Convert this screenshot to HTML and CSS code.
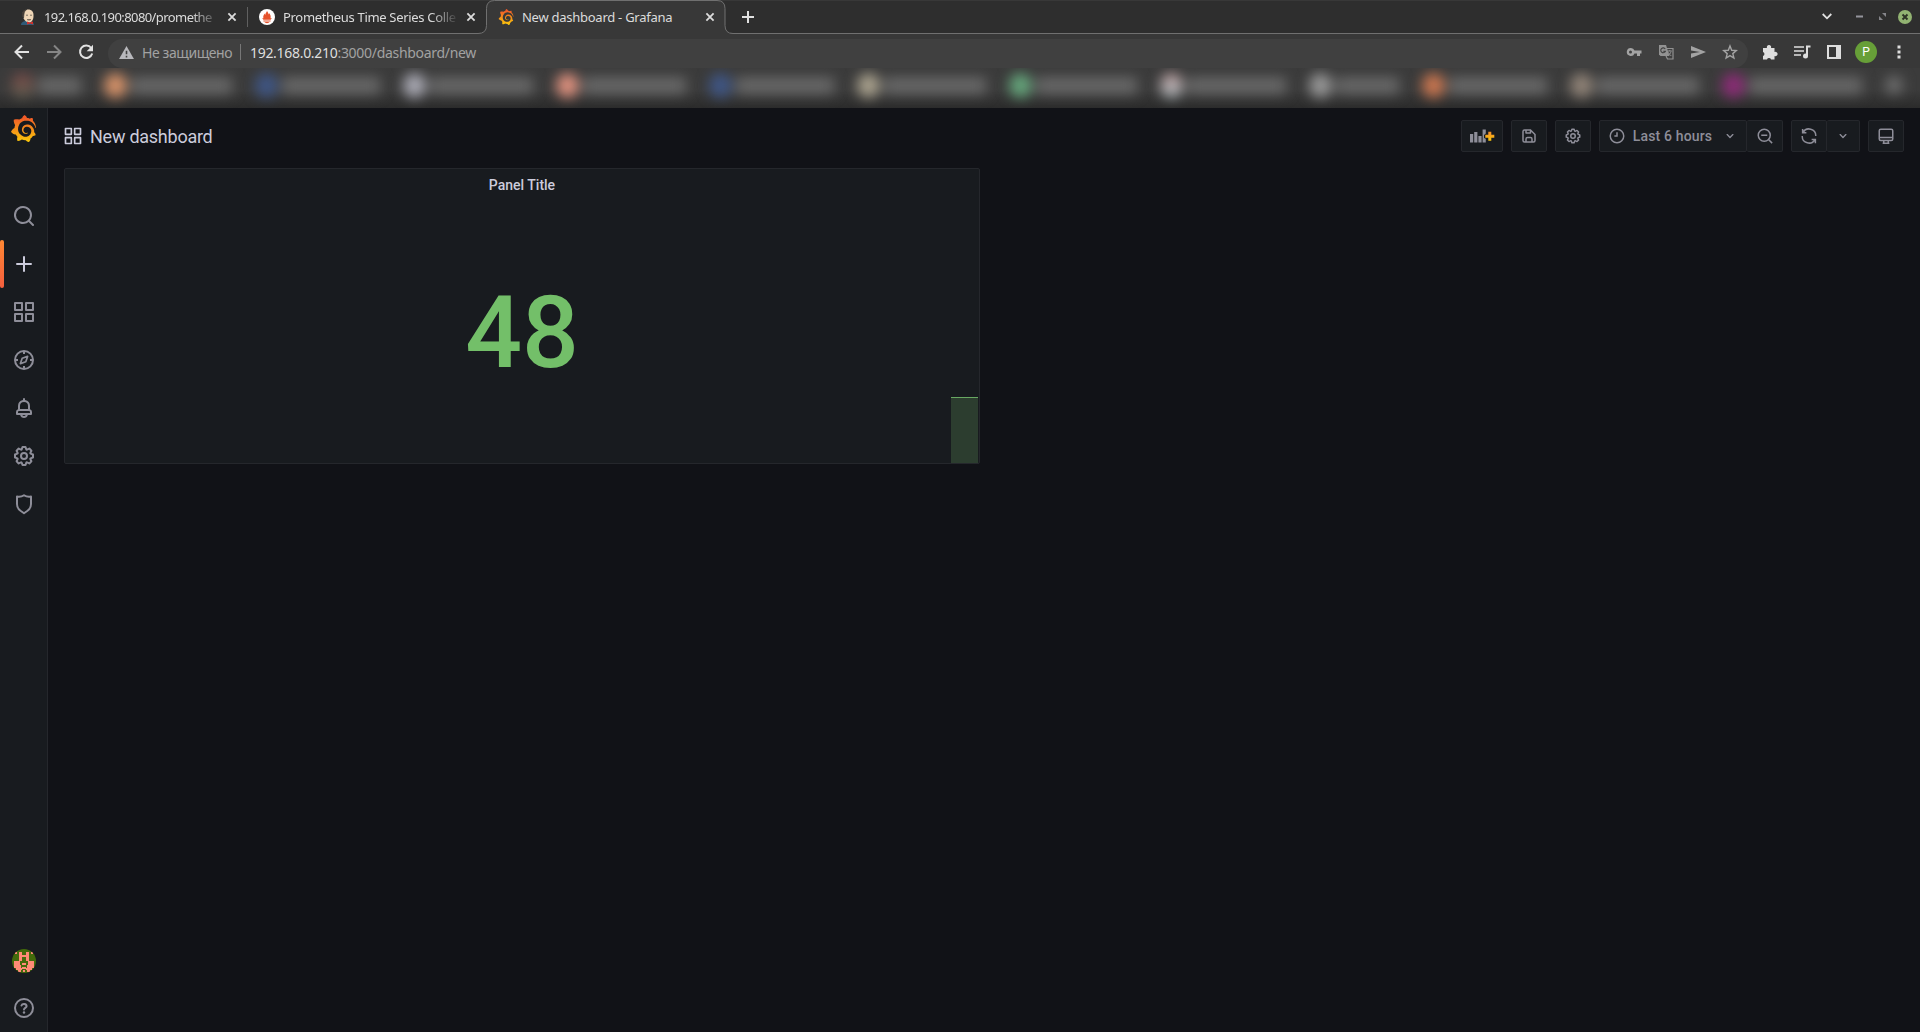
FILE: index.html
```html
<!DOCTYPE html>
<html lang="en">
<head>
<meta charset="utf-8">
<title>New dashboard - Grafana</title>
<link rel="stylesheet" href="styles.css">
</head>
<body>
<svg class="defs" width="0" height="0">
  <defs>
    <linearGradient id="flame" x1="0" y1="0" x2="0" y2="1"><stop offset=".1" stop-color="#f05a28"/><stop offset="1" stop-color="#fbca0a"/></linearGradient>
    <linearGradient id="flame-plus" x1="0" y1="0" x2="0" y2="1"><stop offset="0" stop-color="#f58a2c"/><stop offset="1" stop-color="#fbca0a"/></linearGradient>
    <symbol id="grafana" viewBox="0 0 24 24"><path fill="url(#flame)" d="M23.02 10.59a8.578 8.578 0 0 0-.862-3.034 8.911 8.911 0 0 0-1.789-2.445c.337-1.342-.413-2.505-.413-2.505-1.292-.08-2.113.4-2.416.62-.052-.02-.102-.044-.154-.064-.22-.089-.446-.172-.677-.247-.231-.073-.47-.14-.711-.197a9.867 9.867 0 0 0-.875-.161C14.557.753 12.94 0 12.94 0c-1.804 1.145-2.147 2.744-2.147 2.744l-.018.093c-.098.029-.2.057-.298.088-.138.042-.275.094-.413.143-.138.055-.275.107-.41.166a8.869 8.869 0 0 0-1.557.87l-.063-.029c-2.497-.955-4.716.195-4.716.195-.203 2.658.996 4.33 1.235 4.636a11.608 11.608 0 0 0-.607 2.635C1.636 12.677.953 15.014.953 15.014c1.926 2.214 4.171 2.351 4.171 2.351.003-.002.006-.002.006-.005.285.509.615.994.986 1.446.156.19.32.371.488.548-.704 2.009.099 3.68.099 3.68 2.144.08 3.553-.937 3.849-1.173a9.784 9.784 0 0 0 3.164.501h.08l.055-.003.107-.002.103-.005.003.002c1.01 1.44 2.788 1.646 2.788 1.646 1.264-1.332 1.337-2.653 1.337-2.94v-.058c0-.02-.003-.039-.003-.06.265-.187.52-.387.758-.6a7.875 7.875 0 0 0 1.415-1.7c1.43.083 2.437-.885 2.437-.885-.236-1.49-1.085-2.216-1.264-2.354l-.018-.013-.016-.013a.217.217 0 0 1-.031-.02c.008-.092.016-.18.02-.27.011-.162.016-.323.016-.48v-.253l-.005-.098-.008-.135a1.891 1.891 0 0 0-.01-.13c-.003-.042-.008-.083-.013-.125l-.016-.124-.018-.122a6.215 6.215 0 0 0-2.032-3.73 6.015 6.015 0 0 0-3.222-1.46 6.292 6.292 0 0 0-.85-.048l-.107.002h-.063l-.044.003-.104.008a4.777 4.777 0 0 0-3.335 1.695c-.332.4-.592.84-.768 1.297a4.594 4.594 0 0 0-.312 1.817l.003.091c.005.055.007.11.013.164a3.615 3.615 0 0 0 .698 1.82 3.53 3.53 0 0 0 1.827 1.282c.33.098.66.14.971.137.039 0 .078 0 .114-.002l.063-.003c.02 0 .041-.003.062-.003.034-.002.065-.007.099-.01.007 0 .018-.003.028-.003l.031-.005.06-.008a1.18 1.18 0 0 0 .112-.02c.036-.008.072-.013.109-.024a2.634 2.634 0 0 0 .914-.415c.028-.02.056-.041.085-.065a.248.248 0 0 0 .039-.35.244.244 0 0 0-.309-.06l-.078.042c-.09.044-.184.083-.283.116a2.476 2.476 0 0 1-.475.096c-.028.003-.054.006-.083.006l-.083.002c-.026 0-.054 0-.08-.002l-.102-.006h-.012l-.024.006c-.016-.003-.031-.003-.044-.006-.031-.002-.06-.007-.091-.01a2.59 2.59 0 0 1-.724-.213 2.557 2.557 0 0 1-.667-.438 2.52 2.52 0 0 1-.805-1.475 2.306 2.306 0 0 1-.029-.444l.006-.122v-.023l.002-.031c.003-.021.003-.04.005-.06a3.163 3.163 0 0 1 1.352-2.29 3.12 3.12 0 0 1 .937-.43 2.946 2.946 0 0 1 .776-.101h.06l.07.002.045.003h.026l.07.005a4.041 4.041 0 0 1 1.635.49 3.94 3.94 0 0 1 1.602 1.662 3.77 3.77 0 0 1 .397 1.414l.005.076.003.075c.002.026.002.05.002.075 0 .024.003.052 0 .07v.065l-.002.073-.008.174a6.195 6.195 0 0 1-.08.639 5.1 5.1 0 0 1-.267.927 5.31 5.31 0 0 1-.624 1.13 5.052 5.052 0 0 1-3.237 2.014 4.82 4.82 0 0 1-.649.066l-.039.003h-.287a6.607 6.607 0 0 1-1.716-.265 6.776 6.776 0 0 1-3.4-2.274 6.75 6.75 0 0 1-.746-1.15 6.616 6.616 0 0 1-.714-2.596l-.005-.083-.002-.02v-.056l-.003-.073v-.096l-.003-.104v-.07l.003-.163c.008-.22.026-.45.054-.678a8.707 8.707 0 0 1 .28-1.355c.128-.444.286-.872.473-1.277a7.04 7.04 0 0 1 1.456-2.1 5.925 5.925 0 0 1 .953-.763c.169-.111.343-.213.524-.306.089-.05.182-.091.273-.135.047-.02.093-.042.138-.062a7.177 7.177 0 0 1 .714-.267l.145-.045c.049-.015.098-.026.148-.041.098-.029.197-.052.296-.076.049-.013.1-.02.15-.033l.15-.032.151-.028.076-.013.075-.01.153-.024c.057-.01.114-.013.171-.023l.169-.021c.036-.003.073-.008.106-.01l.073-.008.036-.003.042-.002c.057-.003.114-.008.171-.01l.086-.006h.023l.037-.003.145-.007a7.999 7.999 0 0 1 1.708.125 7.917 7.917 0 0 1 2.048.68 8.253 8.253 0 0 1 1.672 1.09l.09.077.089.078c.06.052.114.107.171.159.057.052.112.106.166.16.052.055.107.107.159.164a8.671 8.671 0 0 1 1.41 1.978c.012.026.028.052.04.078l.04.078.075.156c.023.051.05.1.07.153l.065.15a8.848 8.848 0 0 1 .45 1.34.19.19 0 0 0 .201.142.186.186 0 0 0 .172-.184c.01-.246.002-.532-.024-.856z"/></symbol>
    <symbol id="apps" viewBox="0 0 24 24"><path d="M10,13H3a1,1,0,0,0-1,1v7a1,1,0,0,0,1,1h7a1,1,0,0,0,1-1V14A1,1,0,0,0,10,13ZM9,20H4V15H9ZM21,2H14a1,1,0,0,0-1,1v7a1,1,0,0,0,1,1h7a1,1,0,0,0,1-1V3A1,1,0,0,0,21,2ZM20,9H15V4h5Zm1,4H14a1,1,0,0,0-1,1v7a1,1,0,0,0,1,1h7a1,1,0,0,0,1-1V14A1,1,0,0,0,21,13Zm-1,7H15V15h5ZM10,2H3A1,1,0,0,0,2,3v7a1,1,0,0,0,1,1h7a1,1,0,0,0,1-1V3A1,1,0,0,0,10,2ZM9,9H4V4H9Z"/></symbol>
    <symbol id="cog" viewBox="0 0 24 24"><path d="M21.32,9.55l-1.89-.63.89-1.78A1,1,0,0,0,20.13,6L18,3.87a1,1,0,0,0-1.15-.19l-1.78.89-.63-1.89A1,1,0,0,0,13.5,2h-3a1,1,0,0,0-.95.68L8.92,4.57,7.14,3.68A1,1,0,0,0,6,3.87L3.87,6a1,1,0,0,0-.19,1.15l.89,1.78-1.89.63A1,1,0,0,0,2,10.5v3a1,1,0,0,0,.68.95l1.89.63-.89,1.78A1,1,0,0,0,3.87,18L6,20.13a1,1,0,0,0,1.15.19l1.78-.89.63,1.89a1,1,0,0,0,.95.68h3a1,1,0,0,0,.95-.68l.63-1.89,1.78.89A1,1,0,0,0,18,20.13L20.13,18a1,1,0,0,0,.19-1.15l-.89-1.78,1.89-.63A1,1,0,0,0,22,13.5v-3A1,1,0,0,0,21.32,9.55ZM20,12.78l-1.2.4A2,2,0,0,0,17.64,16l.57,1.14-1.1,1.1L16,17.64a2,2,0,0,0-2.79,1.16l-.4,1.2H11.22l-.4-1.2A2,2,0,0,0,8,17.64l-1.14.57-1.1-1.1L6.36,16A2,2,0,0,0,5.2,13.18L4,12.78V11.22l1.2-.4A2,2,0,0,0,6.36,8L5.79,6.89l1.1-1.1L8,6.36A2,2,0,0,0,10.82,5.2l.4-1.2h1.56l.4,1.2A2,2,0,0,0,16,6.36l1.14-.57,1.1,1.1L17.64,8a2,2,0,0,0,1.16,2.79l1.2.4ZM12,8a4,4,0,1,0,4,4A4,4,0,0,0,12,8Zm0,6a2,2,0,1,1,2-2A2,2,0,0,1,12,14Z"/></symbol>
    <symbol id="angle" viewBox="0 0 24 24"><path d="M17,9.17a1,1,0,0,0-1.41,0L12,12.71,8.46,9.17a1,1,0,0,0-1.41,0,1,1,0,0,0,0,1.42l4.24,4.24a1,1,0,0,0,1.42,0L17,10.59A1,1,0,0,0,17,9.17Z"/></symbol>
    <symbol id="close" viewBox="0 0 10 10"><path d="M1.4 1.4l7.2 7.2M8.6 1.4L1.4 8.6" stroke="#dcdcdc" stroke-width="1.8"/></symbol>
  </defs>
</svg>

<header class="browser">
  <div class="tabstrip">
    <div class="tab tab-first">
      <svg class="favicon" viewBox="0 0 16 16"><path d="M1 16c0-3 3-4 5-4h4c2 0 4 2 4 4z" fill="#2f5a77"/><path d="M2.500 6C2 2 5 .6 8 .6c4 0 5.800 2.600 5.500 6.400 0 4-2 6.500-4.500 6.500S3 10.500 2.500 6z" fill="#efd6b7"/><path d="M2 7C1.500 2.500 4 .4 7 .3 4.500 2 4.500 3 4 5l-.5 4zM6 6.200h2M10 6.200h2M7 10.500c1 .8 2.500.8 4 0" stroke="#30302f" stroke-width=".6" fill="#4a4039"/><path d="M7 12.500l3 1 3-1v3l-3-1-3 1z" fill="#d4312b"/></svg>
      <span class="tab-title fade">192.168.0.190:8080/promethe</span>
      <svg class="close"><use href="#close"/></svg>
    </div>
    <div class="tab tab-second">
      <svg class="favicon" viewBox="0 0 16 16"><circle cx="8" cy="8" r="8" fill="#fff"/><path d="M8 1.800c.4 1.400 1.600 2 1.500 3.600.6-.3.6-1 .5-1.400 1.500 1.500 2.100 3.600 1.500 5.300l1.200-.3c-.2.700-.7 1.500-1.100 1.800H4.400c-.4-.4-.9-1.100-1.100-1.800l1.200.3C3.700 7.300 4.800 5.600 5.700 4.400c.1.700.3 1.200.7 1.400C6.200 4.300 7.700 3.600 8 1.800zM4.400 11.400h7.200v1.200H4.400zM5.600 13.100h4.800c-.4 1.400-4.400 1.400-4.800 0z" fill="#e6522c"/></svg>
      <span class="tab-title fade">Prometheus Time Series Colle</span>
      <svg class="close"><use href="#close"/></svg>
    </div>
    <div class="tab tab-active">
      <svg class="tab-shape" viewBox="0 0 255 34"><path d="M0 34v-.5q8.500 0 8.500-8V8.500Q8.500.5 16.500.5H239q8 0 8 8V25.500q0 8 8 8v.5z" fill="#383838"/><path d="M0 33.500q8.500 0 8.500-8V8.500Q8.500.5 16.500.5H239q8 0 8 8V25.500q0 8 8 8" fill="none" stroke="#707070"/></svg>
      <svg class="favicon"><use href="#grafana"/></svg>
      <span class="tab-title">New dashboard - Grafana</span>
      <svg class="close"><use href="#close"/></svg>
    </div>
    <svg class="new-tab" viewBox="0 0 12 12"><path d="M6 0v12M0 6h12" stroke="#e0e0e0" stroke-width="2"/></svg>
    <div class="window-controls">
      <svg width="10" height="7" viewBox="0 0 10 7"><path d="M.7 1L5 5.300 9.300 1" fill="none" stroke="#e0e0e0" stroke-width="1.800"/></svg>
      <svg width="7" height="7" viewBox="0 0 7 7"><path d="M0 3.500h7" stroke="#94949c" stroke-width="2"/></svg>
      <svg width="7" height="7" viewBox="0 0 7 7"><path d="M3 0h4v4zM0 3v4h4z" fill="#85858a"/></svg>
      <svg width="14" height="14" viewBox="0 0 14 14"><circle cx="7" cy="7" r="7" fill="#92b372"/><path d="M4.500 4.500l5 5M9.500 4.500l-5 5" stroke="#2d3325" stroke-width="1.900"/></svg>
    </div>
  </div>

  <div class="toolbar">
    <svg class="nav" viewBox="0 0 16 16"><path d="M15 8H2M8 1.500L1.500 8 8 14.500" fill="none" stroke="#e2e2e2" stroke-width="2"/></svg>
    <svg class="nav" viewBox="0 0 16 16"><path d="M1 8h13M8 1.500L14.500 8 8 14.500" fill="none" stroke="#858585" stroke-width="2"/></svg>
    <svg class="nav" viewBox="0 0 16 16"><path d="M13.200 4A6.200 6.200 0 1 0 14.200 9.500" fill="none" stroke="#e2e2e2" stroke-width="2"/><path d="M15 .8v6.400H8.700z" fill="#e2e2e2"/></svg>
    <div class="omnibox">
      <svg class="warn" viewBox="0 0 16 14"><path d="M8 0l8 14H0z" fill="#b8b8bc"/><path d="M8 5v4M8 10.500v2" stroke="#404040" stroke-width="1.700"/></svg>
      <span class="insecure">Не защищено</span>
      <span class="divider"></span>
      <span class="url"><b>192.168.0.210</b>:3000/dashboard/new</span>
      <div class="omni-actions">
        <svg width="16" height="16" viewBox="0 0 16 16"><path fill-rule="evenodd" d="M5 4a4 4 0 1 0 3.500 5.500H11V12h3V9.500h1.500v-3h-7A4 4 0 0 0 5 4zm-.5 2.500a1.500 1.500 0 1 1 0 3 1.500 1.500 0 0 1 0-3z" fill="#a3a3a3"/></svg>
        <svg width="16" height="16" viewBox="0 0 16 16"><path d="M1 1h7l3.500 11H2.500L1 10.500z" fill="#929292"/><path d="M8 4.500h7v10.500H9.500L8 12" fill="none" stroke="#929292" stroke-width="1.200"/><path d="M7.200 5A2.400 2.400 0 1 0 7.400 7.200H5.200" fill="none" stroke="#404040" stroke-width="1.100"/><path d="M9.800 7h4M11.800 6v1M13 7.500c-.5 2-1.500 3-2.800 4M10.500 8.500c.7 1.500 1.700 2.500 2.800 3.500" fill="none" stroke="#929292"/></svg>
        <svg width="16" height="16" viewBox="0 0 16 16"><path d="M1 2l15 6-15 6V9.500L10 8 1 6.500z" fill="#a3a3a3"/></svg>
        <svg width="16" height="16" viewBox="0 0 16 16"><path d="M8 2l1.700 4.300 4.600.3-3.500 3 1.100 4.400L8 11.600 4.100 14l1.100-4.400-3.500-3 4.600-.3z" fill="none" stroke="#a3a3a3" stroke-width="1.400"/></svg>
      </div>
    </div>
    <div class="extensions">
      <svg width="16" height="16" viewBox="0 0 16 16"><path d="M1 4h4a2.200 2.200 0 1 1 4 0h3.500v4a2.200 2.200 0 1 1 0 4v3.500H9a2.100 2.100 0 0 0-4 0H1V12a2.100 2.100 0 0 0 0-4z" fill="#dedede"/></svg>
      <svg width="18" height="16" viewBox="0 0 18 16"><path d="M1 3h10M1 7h10M1 11h7" stroke="#dedede" stroke-width="1.700"/><path d="M14 12V2.500h3.500" fill="none" stroke="#dedede" stroke-width="2"/><circle cx="12.500" cy="12" r="2.500" fill="#dedede"/></svg>
      <svg width="14" height="14" viewBox="0 0 14 14"><path fill-rule="evenodd" d="M0 0h14v14H0zM2 2v10h7V2z" fill="#dedede"/></svg>
      <span class="profile">P</span>
      <svg width="4" height="14" viewBox="0 0 4 14"><path d="M.5.500h3v3h-3zM.5 5.500h3v3h-3zM.5 10.500h3v3h-3z" fill="#dedede"/></svg>
    </div>
  </div>

  <div class="bookmarks">
    <div class="bookmark maroon"><i></i><span></span></div>
    <div class="bookmark orange"><i></i><span></span></div>
    <div class="bookmark blue"><i></i><span></span></div>
    <div class="bookmark silver"><i></i><span></span></div>
    <div class="bookmark salmon"><i></i><span></span></div>
    <div class="bookmark blue"><i></i><span></span></div>
    <div class="bookmark sand"><i></i><span></span></div>
    <div class="bookmark green"><i></i><span></span></div>
    <div class="bookmark pearl"><i></i><span></span></div>
    <div class="bookmark gray"><i></i><span></span></div>
    <div class="bookmark rust"><i></i><span></span></div>
    <div class="bookmark taupe"><i></i><span></span></div>
    <div class="bookmark purple"><i></i><span></span></div>
    <div class="bookmark more"><i></i></div>
  </div>
</header>

<div class="app">
  <nav class="sidebar">
    <div class="logo"><svg width="27" height="27"><use href="#grafana"/></svg></div>
    <div class="menu">
      <a class="item"><svg class="icon" viewBox="0 0 24 24"><path d="M21.710,20.290,18,16.610A9,9,0,1,0,16.610,18l3.680,3.680a1,1,0,0,0,1.420,0A1,1,0,0,0,21.710,20.290ZM11,18a7,7,0,1,1,7-7A7,7,0,0,1,11,18Z"/></svg></a>
      <a class="item active"><svg class="icon" viewBox="0 0 24 24"><path d="M19,11H13V5a1,1,0,0,0-2,0v6H5a1,1,0,0,0,0,2h6v6a1,1,0,0,0,2,0V13h6a1,1,0,0,0,0-2Z"/></svg></a>
      <a class="item"><svg class="icon"><use href="#apps"/></svg></a>
      <a class="item"><svg class="icon" viewBox="0 0 24 24"><g fill="none" stroke="currentColor" stroke-width="2"><circle cx="12" cy="12" r="9"/><path d="M12 3v3M12 18v3M3 12h3M18 12h3"/><path d="M15.600 8.400l-1.800 5.400-5.400 1.800 1.800-5.400z" stroke-width="1.700" stroke-linejoin="round"/></g></svg></a>
      <a class="item"><svg class="icon" viewBox="0 0 24 24"><path d="M18,13.180V10a6,6,0,0,0-5-5.910V3a1,1,0,0,0-2,0V4.090A6,6,0,0,0,6,10v3.180A3,3,0,0,0,4,16v2a1,1,0,0,0,1,1H8.140a4,4,0,0,0,7.720,0H19a1,1,0,0,0,1-1V16A3,3,0,0,0,18,13.180ZM8,10a4,4,0,0,1,8,0v3H8Zm4,10a2,2,0,0,1-1.720-1h3.440A2,2,0,0,1,12,20Zm6-3H6V16a1,1,0,0,1,1-1H17a1,1,0,0,1,1,1Z"/></svg></a>
      <a class="item"><svg class="icon"><use href="#cog"/></svg></a>
      <a class="item"><svg class="icon" viewBox="0 0 24 24"><path d="M12 3.200c2 1.400 4.500 1.900 7 1.400v7.300c0 3.200-1.300 5.300-3.500 6.900L12 21.200l-3.500-2.400C6.300 17.200 5 15.100 5 11.900V4.600c2.500.5 5 0 7-1.400z" fill="none" stroke="currentColor" stroke-width="2" stroke-linejoin="round"/></svg></a>
    </div>
    <div class="menu bottom">
      <a class="item"><svg class="avatar" viewBox="0 0 24 24" shape-rendering="crispEdges"><path d="M0 0h24v24H0z" fill="#436a0b"/><path d="M3 3h2v2H3zM19 3h2v2h-2zM7 3h3v3h4V3h3v9h-3V8h-4v4H7zM2 12h6v4h1v3h1v2H4v-2H2zM16 12h6v7h-2v2h-6v-2h1v-3h1zM10 14h4v2h-4zM10 18h4v2h-4zM6 21h3v2H6zM11 21h2v2h-2zM15 21h3v2h-3z" fill="#ff8a76"/></svg></a>
      <a class="item"><svg class="icon" viewBox="0 0 24 24"><g fill="none" stroke="currentColor" stroke-width="2"><circle cx="12" cy="12" r="9"/><path d="M9.500 9.500c.8-2.200 5.100-1.900 5.100.8 0 1.600-2.600 1.700-2.600 3.200" stroke-linecap="round"/></g><circle cx="12" cy="16.500" r="1.200"/></svg></a>
    </div>
  </nav>

  <main class="main">
    <div class="dash-header">
      <svg class="dash-icon"><use href="#apps"/></svg>
      <h1 class="dash-title">New dashboard</h1>
      <div class="actions">
        <button class="btn add"><svg width="25" height="16" viewBox="0 0 25 16"><path d="M0 6h3.200v8.500H0zM4.200 4h3.200v10.500H4.200zM8.400 8h3.200v6.500H8.400zM12.600 1.500h3.200v4L14 7v3l1.800.8v3.700h-3.200z" fill="#8e8e99"/><path d="M18.300 3.800h3v2.900h3v3h-3v3.100h-3V9.700h-3v-3h3z" fill="url(#flame-plus)"/></svg></button>
        <button class="btn"><svg class="ic" viewBox="0 0 24 24"><path d="M20.710,9.290l-6-6a1,1,0,0,0-.32-.21A1.090,1.090,0,0,0,14,3H6A3,3,0,0,0,3,6V18a3,3,0,0,0,3,3H18a3,3,0,0,0,3-3V10A1,1,0,0,0,20.710,9.290ZM9,5h4V7H9Zm6,14H9V16a1,1,0,0,1,1-1h4a1,1,0,0,1,1,1Zm4-1a1,1,0,0,1-1,1H17V16a3,3,0,0,0-3-3H10a3,3,0,0,0-3,3v3H6a1,1,0,0,1-1-1V6A1,1,0,0,1,6,5H7V8A1,1,0,0,0,8,9h6a1,1,0,0,0,1-1V6.410l4,4Z"/></svg></button>
        <button class="btn"><svg class="ic"><use href="#cog"/></svg></button>
        <div class="group">
          <button class="btn range"><svg class="ic" viewBox="0 0 24 24"><path d="M12 7v5H8.500M12 3a9 9 0 1 0 0 18 9 9 0 0 0 0-18z" fill="none" stroke="currentColor" stroke-width="2"/></svg><span>Last 6 hours</span><svg class="ic caret"><use href="#angle"/></svg></button>
          <button class="btn"><svg class="ic" viewBox="0 0 24 24"><path d="M7 11h8M17 17l4.500 4.500M11 3a8 8 0 1 0 0 16 8 8 0 0 0 0-16z" fill="none" stroke="currentColor" stroke-width="2"/></svg></button>
        </div>
        <div class="group">
          <button class="btn"><svg class="ic" viewBox="0 0 24 24"><path d="M3.500 2.500v5H8.500M4 7.500A9 9 0 0 1 21 12M20.500 21.500v-5h-5M20 16.500A9 9 0 0 1 3 12" fill="none" stroke="currentColor" stroke-width="2"/></svg></button>
          <button class="btn small"><svg class="ic caret"><use href="#angle"/></svg></button>
        </div>
        <button class="btn"><svg class="ic" viewBox="0 0 24 24"><path d="M5 3h14a2 2 0 0 1 2 2v11a2 2 0 0 1-2 2H5a2 2 0 0 1-2-2V5a2 2 0 0 1 2-2zM3 14h18M9 18v3M15 18v3M7.500 21.500h9" fill="none" stroke="currentColor" stroke-width="2"/></svg></button>
      </div>
    </div>
    <section class="panel">
      <h2 class="panel-title">Panel Title</h2>
      <div class="value">48</div>
      <div class="spark"></div>
    </section>
  </main>
</div>
</body>
</html>
```

FILE: styles.css
```css
* { box-sizing: border-box; }
html, body { height: 100%; }
body { margin: 0; display: flex; flex-direction: column; background: #111217; overflow: hidden; font-family: Roboto, sans-serif; }
svg { display: block; flex: none; }
.defs { position: absolute; }

/* Browser chrome */
.browser { flex: none; height: 108px; background: #383838; font-family: "Noto Sans", sans-serif; color: #dcdcdc; }
.tabstrip { display: flex; align-items: center; height: 34px; background: #2e2e2e; border-bottom: 1px solid #707070; box-shadow: inset 0 1px #383838; font-size: 13px; }
.tab { position: relative; display: flex; align-items: center; height: 34px; flex: none; }
.tab-first { width: 248px; padding-left: 20px; }
.tab-first::after { content: ""; width: 1px; height: 20px; background: #606060; margin-left: 10px; }
.tab-second { width: 247px; padding-left: 11px; }
.tab-active { width: 231px; padding-left: 3px; }
.tab-shape { position: absolute; left: -17px; top: 0; width: 255px; height: 34px; }
.favicon { position: relative; width: 16px; height: 16px; margin-right: 8px; }
.tab-title { position: relative; width: 176px; margin-right: -2px; height: 20px; line-height: 20px; white-space: nowrap; letter-spacing: -.26px; }
.tab-first .tab-title { letter-spacing: -.58px; }
.tab-second .tab-title { letter-spacing: -.32px; }
.fade { -webkit-mask-image: linear-gradient(to right, #000 84%, transparent 100%); mask-image: linear-gradient(to right, #000 84%, transparent 100%); }
.close { position: relative; width: 10px; height: 10px; margin-left: 9px; }
.new-tab { width: 12px; height: 12px; margin-left: 16px; }
.window-controls { display: flex; align-items: center; margin-left: auto; padding-right: 8px; }
.window-controls svg:nth-child(2) { margin-left: 24px; }
.window-controls svg:nth-child(3) { margin-left: 16px; }
.window-controls svg:nth-child(4) { margin-left: 12px; }
.toolbar { display: flex; align-items: center; height: 34px; padding: 2px 20px 0 14px; }
.nav { width: 16px; height: 16px; margin-right: 16px; }
.omnibox { flex: 1; height: 29px; margin-left: -2px; margin-top: 2px; border-radius: 15px; background: #404040; display: flex; align-items: center; padding: 0 10px 2px 11px; font-size: 14px; color: #a2a2a2; }
.warn { width: 15px; height: 13px; margin-right: 8px; }
.insecure { width: 92px; white-space: nowrap; letter-spacing: -.42px; }
.divider { width: 1px; height: 16px; background: #777; margin: 0 9px 0 6px; }
.url { letter-spacing: -.3px; }
.url b { font-weight: 400; color: #dedede; }
.omni-actions { margin-left: auto; display: flex; gap: 16px; }
.extensions { display: flex; align-items: center; width: 152px; padding-left: 14px; }
.extensions svg:nth-child(2) { margin-left: 15px; }
.extensions svg:nth-child(3) { margin-left: 16px; }
.profile { width: 22px; height: 22px; margin: 0 20px 0 14px; border-radius: 50%; background: #679f38; color: #fff; text-align: center; font: 12px/22px Roboto, sans-serif; flex: none; }

.bookmarks { display: grid; grid-template-columns: 93px 151px 148px 153px 153px 148px 152px 151px 149px 113px 148px 152px 163px 34px; align-items: center; height: 40px; padding: 0 0 6px 11px; overflow: hidden; background: linear-gradient(#3b3b3b 55%, #2b2b2b); }
.bookmark { display: flex; align-items: center; gap: 4px; filter: blur(6.5px); }
.bookmark i { width: 23px; height: 25px; border-radius: 50%; background: #888; flex: none; }
.bookmark span { flex: 1; height: 17px; margin-right: 23px; background: #686868; }
.maroon i { background: linear-gradient(#7e4747, #5d6150); }
.orange i { background: #d9946a; }
.blue i { background: #3f5685; }
.silver i { background: #aaaab4; }
.salmon i { background: #e0927f; }
.sand i { background: #aaa28e; }
.green i { background: #65a57b; }
.pearl i { background: linear-gradient(#bf9c9c, #a9b9bd); }
.gray i { background: #989898; }
.rust i { background: #cc7750; }
.taupe i { background: #918478; }
.purple i { background: #8c2c77; }
.more i { background: #707070; width: 18px; height: 18px; }

/* Application */
.app { flex: 1; display: flex; min-height: 0; }
.sidebar { width: 48px; background: #181b1f; border-right: 1px solid #25272c; display: flex; flex-direction: column; color: #8e8e99; }
.logo { height: 84px; padding: 7px 0 0 10px; }
.item { position: relative; display: flex; align-items: center; justify-content: center; width: 48px; height: 48px; }
.icon { width: 24px; height: 24px; fill: currentColor; }
.active { color: #ccccdc; }
.active::before { content: ""; position: absolute; left: 0; top: 0; width: 4px; height: 48px; border-radius: 2px; background: linear-gradient(#ff8833, #f55f3e); }
.bottom { margin-top: auto; }
.avatar { width: 24px; height: 24px; border-radius: 50%; margin-top: 2px; }
.main { flex: 1; padding: 0 16px; }
.dash-header { display: flex; align-items: center; height: 56px; margin-bottom: 4px; }
.dash-icon { width: 20px; height: 20px; margin: 0 7px 0 -1px; fill: #ccccdc; }
.dash-title { margin: 0; font-size: 18px; font-weight: 400; letter-spacing: -.25px; color: #ccccdc; }
.actions { display: flex; gap: 8px; margin-left: auto; }
.group { display: flex; }
.btn { width: 36px; height: 32px; padding: 0; display: flex; align-items: center; justify-content: center; background: #181b1f; border: 1px solid #25272c; border-radius: 2px; color: #8e8e99; font: 500 14px Roboto, sans-serif; }
.add { width: 42px; }
.range { width: 148px; }
.range span { margin: 0 10px 0 7px; letter-spacing: .15px; }
.small { width: 33px; }
.group .btn + .btn { border-left: 0; }
.ic { width: 18px; height: 18px; fill: currentColor; }
.caret { width: 16px; height: 16px; }
.panel { position: relative; width: 916px; height: 296px; background: #181b1f; border: 1px solid #25272c; border-radius: 2px; display: flex; flex-direction: column; }
.panel-title { margin: 0; height: 32px; text-align: center; font: 500 14px/32px Roboto, sans-serif; color: #ccccdc; }
.value { flex: 1; display: flex; align-items: center; justify-content: center; padding-top: 1px; font: 500 100px Roboto, sans-serif; color: #73bf69; }
.spark { position: absolute; right: 1px; bottom: 0; width: 27px; height: 66px; background: #2c3d2f; border-top: 1px solid #68a862; }
```
